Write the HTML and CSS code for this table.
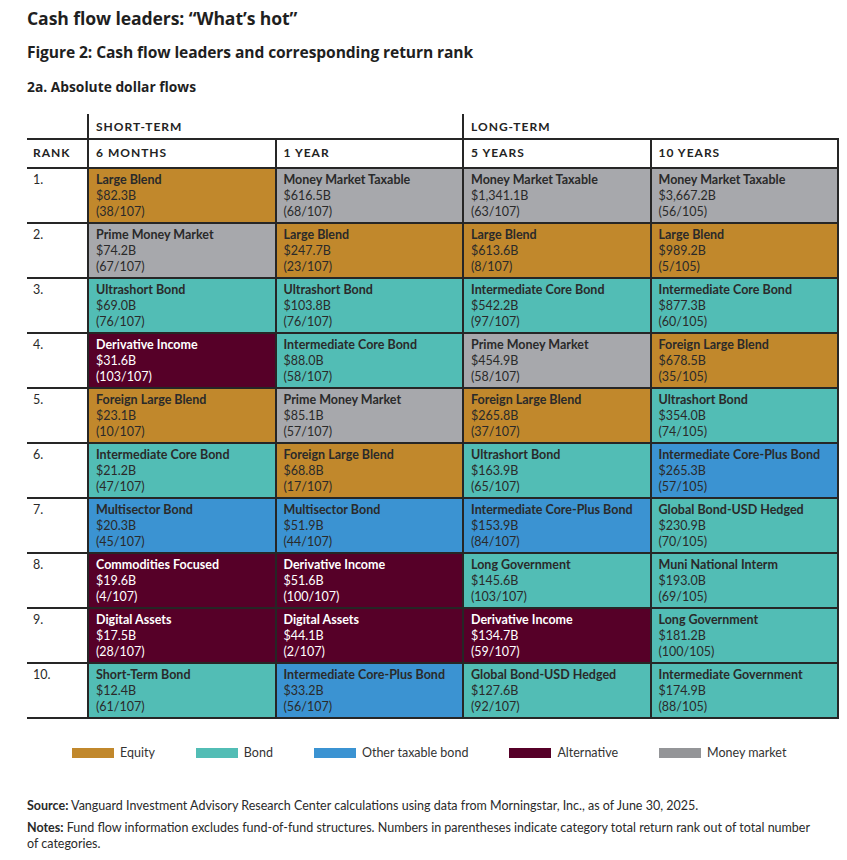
FILE: index.html
```html
<!DOCTYPE html>
<html lang="en">
<head>
<meta charset="utf-8">
<title>Cash flow leaders</title>
<link rel="stylesheet" href="styles.css">
</head>
<body>
<div class="page">
  <h1 class="title">Cash flow leaders: “What’s hot”</h1>
  <h2 class="figure">Figure 2: Cash flow leaders and corresponding return rank</h2>
  <h3 class="sub">2a. Absolute dollar flows</h3>

  <table class="flows">
    <colgroup>
      <col class="c-rank"><col class="c-data"><col class="c-data"><col class="c-data"><col class="c-data">
    </colgroup>
    <thead>
      <tr class="grp-row">
        <th class="grp-blank"></th>
        <th class="grp" colspan="2">SHORT-TERM</th>
        <th class="grp" colspan="2">LONG-TERM</th>
      </tr>
      <tr class="col-row">
        <th class="rank-h">RANK</th>
        <th>6 MONTHS</th>
        <th>1 YEAR</th>
        <th>5 YEARS</th>
        <th class="last">10 YEARS</th>
      </tr>
    </thead>
    <tbody>
      <tr>
        <td class="rank">1.</td>
        <td class="eq"><b>Large Blend</b><span>$82.3B</span><span>(38/107)</span></td>
        <td class="mm"><b>Money Market Taxable</b><span>$616.5B</span><span>(68/107)</span></td>
        <td class="mm"><b>Money Market Taxable</b><span>$1,341.1B</span><span>(63/107)</span></td>
        <td class="mm"><b>Money Market Taxable</b><span>$3,667.2B</span><span>(56/105)</span></td>
      </tr>
      <tr>
        <td class="rank">2.</td>
        <td class="mm"><b>Prime Money Market</b><span>$74.2B</span><span>(67/107)</span></td>
        <td class="eq"><b>Large Blend</b><span>$247.7B</span><span>(23/107)</span></td>
        <td class="eq"><b>Large Blend</b><span>$613.6B</span><span>(8/107)</span></td>
        <td class="eq"><b>Large Blend</b><span>$989.2B</span><span>(5/105)</span></td>
      </tr>
      <tr>
        <td class="rank">3.</td>
        <td class="bd"><b>Ultrashort Bond</b><span>$69.0B</span><span>(76/107)</span></td>
        <td class="bd"><b>Ultrashort Bond</b><span>$103.8B</span><span>(76/107)</span></td>
        <td class="bd"><b>Intermediate Core Bond</b><span>$542.2B</span><span>(97/107)</span></td>
        <td class="bd"><b>Intermediate Core Bond</b><span>$877.3B</span><span>(60/105)</span></td>
      </tr>
      <tr>
        <td class="rank">4.</td>
        <td class="alt"><b>Derivative Income</b><span>$31.6B</span><span>(103/107)</span></td>
        <td class="bd"><b>Intermediate Core Bond</b><span>$88.0B</span><span>(58/107)</span></td>
        <td class="mm"><b>Prime Money Market</b><span>$454.9B</span><span>(58/107)</span></td>
        <td class="eq"><b>Foreign Large Blend</b><span>$678.5B</span><span>(35/105)</span></td>
      </tr>
      <tr>
        <td class="rank">5.</td>
        <td class="eq"><b>Foreign Large Blend</b><span>$23.1B</span><span>(10/107)</span></td>
        <td class="mm"><b>Prime Money Market</b><span>$85.1B</span><span>(57/107)</span></td>
        <td class="eq"><b>Foreign Large Blend</b><span>$265.8B</span><span>(37/107)</span></td>
        <td class="bd"><b>Ultrashort Bond</b><span>$354.0B</span><span>(74/105)</span></td>
      </tr>
      <tr>
        <td class="rank">6.</td>
        <td class="bd"><b>Intermediate Core Bond</b><span>$21.2B</span><span>(47/107)</span></td>
        <td class="eq"><b>Foreign Large Blend</b><span>$68.8B</span><span>(17/107)</span></td>
        <td class="bd"><b>Ultrashort Bond</b><span>$163.9B</span><span>(65/107)</span></td>
        <td class="ot"><b>Intermediate Core-Plus Bond</b><span>$265.3B</span><span>(57/105)</span></td>
      </tr>
      <tr>
        <td class="rank">7.</td>
        <td class="ot"><b>Multisector Bond</b><span>$20.3B</span><span>(45/107)</span></td>
        <td class="ot"><b>Multisector Bond</b><span>$51.9B</span><span>(44/107)</span></td>
        <td class="ot"><b>Intermediate Core-Plus Bond</b><span>$153.9B</span><span>(84/107)</span></td>
        <td class="bd"><b>Global Bond-USD Hedged</b><span>$230.9B</span><span>(70/105)</span></td>
      </tr>
      <tr>
        <td class="rank">8.</td>
        <td class="alt"><b>Commodities Focused</b><span>$19.6B</span><span>(4/107)</span></td>
        <td class="alt"><b>Derivative Income</b><span>$51.6B</span><span>(100/107)</span></td>
        <td class="bd"><b>Long Government</b><span>$145.6B</span><span>(103/107)</span></td>
        <td class="bd"><b>Muni National Interm</b><span>$193.0B</span><span>(69/105)</span></td>
      </tr>
      <tr>
        <td class="rank">9.</td>
        <td class="alt"><b>Digital Assets</b><span>$17.5B</span><span>(28/107)</span></td>
        <td class="alt"><b>Digital Assets</b><span>$44.1B</span><span>(2/107)</span></td>
        <td class="alt"><b>Derivative Income</b><span>$134.7B</span><span>(59/107)</span></td>
        <td class="bd"><b>Long Government</b><span>$181.2B</span><span>(100/105)</span></td>
      </tr>
      <tr>
        <td class="rank">10.</td>
        <td class="bd"><b>Short-Term Bond</b><span>$12.4B</span><span>(61/107)</span></td>
        <td class="ot"><b>Intermediate Core-Plus Bond</b><span>$33.2B</span><span>(56/107)</span></td>
        <td class="bd"><b>Global Bond-USD Hedged</b><span>$127.6B</span><span>(92/107)</span></td>
        <td class="bd"><b>Intermediate Government</b><span>$174.9B</span><span>(88/105)</span></td>
      </tr>
    </tbody>
  </table>

  <ul class="legend">
    <li><i class="sw sw-eq"></i>Equity</li>
    <li><i class="sw sw-bd"></i>Bond</li>
    <li><i class="sw sw-ot"></i>Other taxable bond</li>
    <li><i class="sw sw-alt"></i>Alternative</li>
    <li><i class="sw sw-mm"></i>Money market</li>
  </ul>

  <p class="note"><b>Source:</b> Vanguard Investment Advisory Research Center calculations using data from Morningstar, Inc., as of June 30, 2025.</p>
  <p class="note notes"><b>Notes:</b> Fund flow information excludes fund-of-fund structures. Numbers in parentheses indicate category total return rank out of total number of categories.</p>
</div>
</body>
</html>
```

FILE: styles.css
```css
html, body {
  margin: 0;
  padding: 0;
  background: #ffffff;
}

body {
  font-family: "Lato", "Open Sans", Arial, sans-serif;
  color: #232323;
}

.page {
  padding: 0 9px 0 27px;
  width: 811px;
}

.title,
.figure,
.sub {
  font-family: "Open Sans", "Lato", Arial, sans-serif;
  font-weight: 700;
  color: #1f1f1f;
}

.title {
  margin: 8px 0 0;
  font-size: 17.6px;
  line-height: 20px;
  letter-spacing: -0.1px;
}

.figure {
  margin: 14px 0 0;
  font-size: 15.6px;
  line-height: 20px;
  letter-spacing: -0.1px;
}

.sub {
  margin: 16px 0 0;
  font-size: 13.8px;
  line-height: 18px;
}

.flows {
  margin-top: 18px;
  width: 811px;
  table-layout: fixed;
  border-collapse: collapse;
  font-size: 12.5px;
  line-height: 16px;
}

.c-rank { width: 61px; }
.c-data { width: 187.5px; }

.flows th {
  text-align: left;
  font-weight: 700;
  letter-spacing: 1px;
  font-size: 12px;
  padding: 0 7px;
  vertical-align: middle;
}

.grp-row th {
  height: 22px;
  padding-top: 2px;
}

.grp {
  border-left: 2px solid #262626;
}

.col-row th {
  height: 25px;
  border-top: 2px solid #262626;
  border-bottom: 2px solid #262626;
  border-left: 2px solid #262626;
  padding-bottom: 2px;
}

.col-row th.rank-h {
  border-left: none;
  padding-left: 6px;
}

.col-row th.last {
  border-right: 2px solid #262626;
}

.flows td {
  height: 45.2px;
  vertical-align: top;
  padding: 3px 7px 2px;
  border: 2px solid #262626;
  color: #2a2a2a;
}

.flows td b,
.flows td span {
  display: block;
  white-space: nowrap;
}

.flows td b {
  font-weight: 700;
}

.flows td.rank {
  border-left: none;
  border-right: 2px solid #262626;
  padding-left: 6px;
}

.eq { background: #c1882c; }
.bd { background: #52bdb5; }
.ot { background: #3b93d2; }
.alt { background: #560028; }
.flows td.alt { color: #ffffff; }
.mm { background: #a7a8ac; }

.legend {
  list-style: none;
  margin: 26px 0 0;
  padding: 0 0 0 45px;
  display: flex;
  gap: 41px;
  font-size: 12.5px;
  line-height: 16px;
  color: #333333;
}

.legend li {
  display: flex;
  align-items: center;
  gap: 6px;
}

.sw {
  display: block;
  width: 42px;
  height: 10px;
}

.sw-eq { background: #c1882c; }
.sw-bd { background: #52bdb5; }
.sw-ot { background: #3b93d2; }
.sw-alt { background: #560028; }
.sw-mm { background: #949598; }

.note {
  margin: 37px 0 0;
  max-width: 790px;
  font-size: 12.5px;
  line-height: 16px;
  color: #2a2a2a;
}

.note b {
  font-weight: 700;
}

.notes {
  margin-top: 6px;
}
```
